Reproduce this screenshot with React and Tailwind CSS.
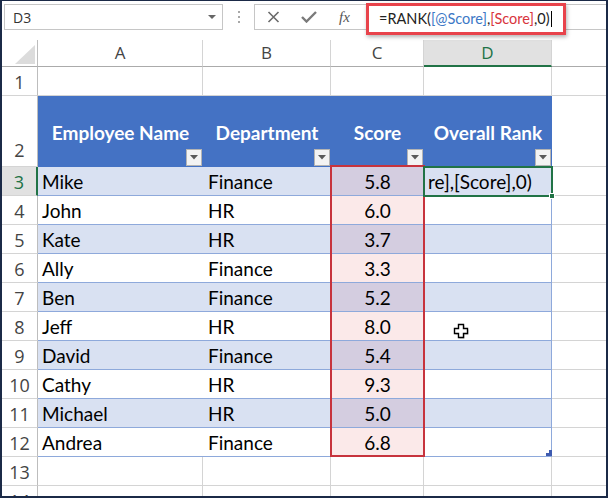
import React from "react";

const data = [
  { n: 3, name: "Mike", dept: "Finance", score: "5.8" },
  { n: 4, name: "John", dept: "HR", score: "6.0" },
  { n: 5, name: "Kate", dept: "HR", score: "3.7" },
  { n: 6, name: "Ally", dept: "Finance", score: "3.3" },
  { n: 7, name: "Ben", dept: "Finance", score: "5.2" },
  { n: 8, name: "Jeff", dept: "HR", score: "8.0" },
  { n: 9, name: "David", dept: "Finance", score: "5.4" },
  { n: 10, name: "Cathy", dept: "HR", score: "9.3" },
  { n: 11, name: "Michael", dept: "HR", score: "5.0" },
  { n: 12, name: "Andrea", dept: "Finance", score: "6.8" },
];

const cellFont = { fontFamily: "Lato, 'Open Sans', sans-serif" };
const hdrFont = { fontFamily: "'Open Sans', 'Noto Sans', sans-serif" };

function FilterBtn() {
  return (
    <div className="absolute right-[1px] bottom-[1px] w-[16px] h-[17px] bg-[#f3f3f3] border border-[#b4b4b4] flex items-center justify-center">
      <svg width="8" height="5" viewBox="0 0 8 5">
        <polygon points="0,0 8,0 4,4.5" fill="#5a5a5a" />
      </svg>
    </div>
  );
}

function RowHead({ n, selected, align }) {
  return (
    <div
      style={hdrFont}
      className={
        selected
          ? "w-[36px] shrink-0 bg-[#e1e1e1] border-r-2 border-r-[#217346] border-b border-b-[#d4d4d4] flex items-end justify-center pb-[1px] text-[18px] leading-[24px] text-[#217346]"
          : align === "center"
          ? "w-[36px] shrink-0 bg-white border-r border-r-[#bdbdbd] border-b border-b-[#d4d4d4] flex items-end justify-center pb-[1px] text-[18px] leading-[24px] text-[#444]"
          : "w-[36px] shrink-0 bg-white border-r border-r-[#bdbdbd] border-b border-b-[#d4d4d4] flex items-end justify-center pb-[4px] text-[18px] leading-[24px] text-[#444]"
      }
    >
      {n}
    </div>
  );
}

function ColHead({ w, label, selected }) {
  return (
    <div
      style={hdrFont}
      className={
        selected
          ? w + " shrink-0 bg-[#e1e1e1] border-r border-r-[#d4d4d4] border-b-2 border-b-[#217346] flex items-center justify-center text-[17px] text-[#217346]"
          : w + " shrink-0 bg-white border-r border-r-[#d4d4d4] border-b border-b-[#ababab] flex items-center justify-center text-[17px] text-[#444]"
      }
    >
      {label}
    </div>
  );
}

function DataRow({ r, i }) {
  const band = i % 2 === 0;
  return (
    <div className="flex h-[29px] shrink-0" style={cellFont}>
      <RowHead n={r.n} selected={r.n === 3} align="center" />
      <div
        className={
          band
            ? "w-[165px] shrink-0 bg-[#d9e1f2] border-b border-b-[#8ea9db] flex items-end pl-[4px] pb-[2px] text-[19px] leading-[23px] text-black"
            : "w-[165px] shrink-0 bg-white border-b border-b-[#8ea9db] flex items-end pl-[4px] pb-[2px] text-[19px] leading-[23px] text-black"
        }
      >
        {r.name}
      </div>
      <div
        className={
          band
            ? "w-[128px] shrink-0 bg-[#d9e1f2] border-b border-b-[#8ea9db] flex items-end pl-[5px] pb-[2px] text-[19px] leading-[23px] text-black"
            : "w-[128px] shrink-0 bg-white border-b border-b-[#8ea9db] flex items-end pl-[5px] pb-[2px] text-[19px] leading-[23px] text-black"
        }
      >
        {r.dept}
      </div>
      <div
        className={
          band
            ? "w-[93px] shrink-0 bg-[#d4cde0] border-b border-b-[#8ea9db] flex items-end justify-center pb-[2px] text-[19px] leading-[23px] text-black"
            : "w-[93px] shrink-0 bg-[#fbe9e9] border-b border-b-[#8ea9db] flex items-end justify-center pb-[2px] text-[19px] leading-[23px] text-black"
        }
      >
        {r.score}
      </div>
      <div
        className={
          band
            ? "w-[128px] shrink-0 bg-[#d9e1f2] border-b border-b-[#8ea9db] border-r border-r-[#8ea9db] flex items-end pl-[4px] pb-[2px] text-[19px] leading-[23px] text-black overflow-hidden whitespace-nowrap"
            : "w-[128px] shrink-0 bg-white border-b border-b-[#8ea9db] border-r border-r-[#8ea9db] flex items-end pl-[4px] pb-[2px] text-[19px] leading-[23px] text-black overflow-hidden whitespace-nowrap"
        }
      >
        {r.n === 3 ? "re],[Score],0)" : ""}
      </div>
      <div className="flex-1 border-b border-b-[#d4d4d4] bg-white" />
    </div>
  );
}

function EmptyRow({ n }) {
  return (
    <div className="h-[29px] shrink-0 flex">
      <RowHead n={n} align="center" />
      <div className="w-[165px] shrink-0 border-r border-b border-[#d4d4d4]" />
      <div className="w-[128px] shrink-0 border-r border-b border-[#d4d4d4]" />
      <div className="w-[93px] shrink-0 border-r border-b border-[#d4d4d4]" />
      <div className="w-[128px] shrink-0 border-r border-b border-[#d4d4d4]" />
      <div className="flex-1 border-b border-[#d4d4d4]" />
    </div>
  );
}

export default function App() {
  return (
    <div className="relative w-[608px] h-[498px] overflow-hidden bg-white border-t border-l-2 border-r-2 border-b-2 border-[#1b2a47] flex flex-col">
      {/* Toolbar */}
      <div className="h-[39px] shrink-0 flex items-start pt-[3px] pl-[2px]">
        <div className="w-[219px] h-[26px] border border-[#c6c6c6] bg-white flex items-center justify-between pl-[8px] pr-[6px]">
          <span style={hdrFont} className="text-[14px] text-[#333]">D3</span>
          <svg width="8" height="5" viewBox="0 0 8 5">
            <polygon points="0,0 8,0 4,4" fill="#666" />
          </svg>
        </div>
        <div className="w-[31px] h-[26px] flex flex-col items-center justify-center gap-[3px]">
          <div className="w-[2px] h-[2px] bg-[#a8a8a8]" />
          <div className="w-[2px] h-[2px] bg-[#a8a8a8]" />
          <div className="w-[2px] h-[2px] bg-[#a8a8a8]" />
        </div>
        <div className="flex-1 h-[26px] border border-[#c6c6c6] border-r-0 bg-white flex items-center">
          <div className="w-[108px] flex items-center pl-[12px]">
            <svg width="13" height="12" viewBox="0 0 13 12">
              <path d="M1.5 1 L11.5 11 M11.5 1 L1.5 11" stroke="#6a6a6a" strokeWidth="1.6" fill="none" />
            </svg>
            <svg width="16" height="12" viewBox="0 0 16 12" className="ml-[21px]">
              <path d="M1 6 L5.5 10.5 L15 1" stroke="#7a7a7a" strokeWidth="2.4" fill="none" />
            </svg>
            <span
              className="ml-[22px] italic text-[15px] text-[#555]"
              style={{ fontFamily: "'Liberation Serif', serif" }}
            >
              fx
            </span>
          </div>
        </div>
      </div>

      {/* Column headers */}
      <div className="h-[27px] shrink-0 flex">
        <div className="w-[36px] shrink-0 border-r border-r-[#bdbdbd] border-b border-b-[#ababab] flex items-end justify-end pr-[2px] pb-[2px]">
          <svg width="20" height="19" viewBox="0 0 20 19">
            <polygon points="20,0 20,19 0,19" fill="#dcdcdc" />
          </svg>
        </div>
        <ColHead w="w-[165px]" label="A" />
        <ColHead w="w-[128px]" label="B" />
        <ColHead w="w-[93px]" label="C" />
        <ColHead w="w-[128px]" label="D" selected />
        <div className="flex-1 border-b border-b-[#ababab]" />
      </div>

      <EmptyRow n={1} />

      {/* Table header row */}
      <div className="h-[71px] shrink-0 flex" style={cellFont}>
        <RowHead n={2} />
        {[
          ["w-[165px]", "Employee Name"],
          ["w-[128px]", "Department"],
          ["w-[93px]", "Score"],
          ["w-[128px]", "Overall Rank"],
        ].map(([w, t]) => (
          <div
            key={t}
            className={w + " shrink-0 relative bg-[#4472c4] flex items-center justify-center pt-[2px] text-white font-bold text-[19px] leading-[23px] whitespace-nowrap"}
          >
            {t}
            <FilterBtn />
          </div>
        ))}
        <div className="flex-1 border-b border-b-[#d4d4d4]" />
      </div>

      {data.map((r, i) => (
        <DataRow key={r.n} r={r} i={i} />
      ))}

      <EmptyRow n={13} />
      <EmptyRow n={14} />

      {/* Formula text with red highlight */}
      <div className="absolute left-[364px] top-[2px] w-[200px] h-[32px] border-[3px] border-[#e8434b] bg-white shadow-[1px_2px_4px_rgba(0,0,0,0.3)] flex items-center pl-[10px]">
        <span className="text-[14.5px] text-[#222] whitespace-nowrap" style={cellFont}>
          =RANK(
          <span className="text-[#3c78c6]">[@Score]</span>,
          <span className="text-[#d8343c]">[Score]</span>,0)
        </span>
        <span className="w-[1px] h-[16px] bg-black ml-[1px]" />
      </div>

      {/* Red border around score column */}
      <div className="absolute left-[328px] top-[164px] w-[95px] h-[292px] border-2 border-[#c7333d] pointer-events-none" />

      {/* Selected cell D3 */}
      <div className="absolute left-[421px] top-[165px] w-[130px] h-[31px] border-2 border-[#217346] pointer-events-none" />
      <div className="absolute left-[547px] top-[192px] w-[6px] h-[6px] bg-[#217346] border border-white" />

      {/* Table resize handle */}
      <svg className="absolute left-[544px] top-[449px]" width="6" height="6" viewBox="0 0 6 6">
        <path d="M3 0 H6 V6 H0 V3 H3 Z" fill="#3f5bb0" />
      </svg>

      {/* Cursor */}
      <svg className="absolute left-[451px] top-[322px]" width="17" height="17" viewBox="0 0 17 17">
        <polygon points="6.5,2.5 11.5,2.5 11.5,6.5 15.5,6.5 15.5,11.5 11.5,11.5 11.5,15.5 6.5,15.5 6.5,11.5 2.5,11.5 2.5,6.5 6.5,6.5" fill="#888" opacity="0.6" />
        <polygon points="5.5,1.5 10.5,1.5 10.5,5.5 14.5,5.5 14.5,10.5 10.5,10.5 10.5,14.5 5.5,14.5 5.5,10.5 1.5,10.5 1.5,5.5 5.5,5.5" fill="white" stroke="black" strokeWidth="1.4" />
      </svg>
    </div>
  );
}
